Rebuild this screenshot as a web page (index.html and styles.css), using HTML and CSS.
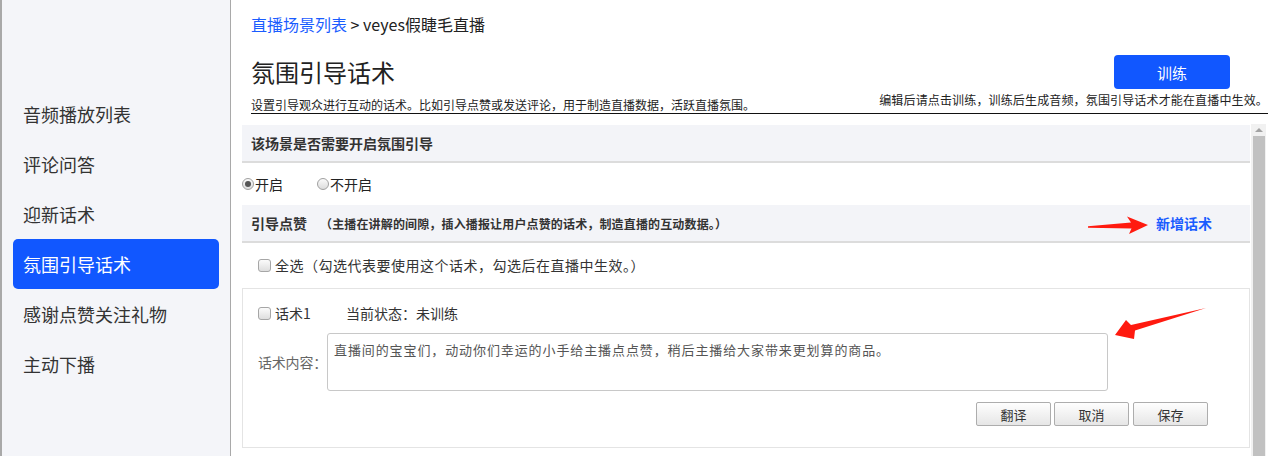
FILE: index.html
```html
<!DOCTYPE html>
<html lang="zh">
<head>
<meta charset="utf-8">
<title>氛围引导话术</title>
<link rel="stylesheet" href="styles.css">
</head>
<body>
<div class="page">
  <aside class="sidebar">
    <ul class="menu">
      <li class="menu-item">音频播放列表</li>
      <li class="menu-item">评论问答</li>
      <li class="menu-item">迎新话术</li>
      <li class="menu-item active">氛围引导话术</li>
      <li class="menu-item">感谢点赞关注礼物</li>
      <li class="menu-item">主动下播</li>
    </ul>
  </aside>
  <main class="main">
    <div class="crumb"><a class="crumb-link">直播场景列表</a> &gt; veyes假睫毛直播</div>
    <div class="title-row">
      <h1 class="title">氛围引导话术</h1>
      <button class="train-btn">训练</button>
    </div>
    <div class="desc-row">
      <span class="desc-left">设置引导观众进行互动的话术。比如引导点赞或发送评论，用于制造直播数据，活跃直播氛围。</span>
      <span class="desc-right">编辑后请点击训练，训练后生成音频，氛围引导话术才能在直播中生效。</span>
    </div>
    <div class="scroll-wrap">
      <div class="scroll-content">
        <div class="sec-head">该场景是否需要开启氛围引导</div>
        <div class="radio-row">
          <label class="radio-label"><span class="radio checked"></span>开启</label>
          <label class="radio-label"><span class="radio"></span>不开启</label>
        </div>
        <div class="sec-head split">
          <span><span>引导点赞</span><span class="sec-note">（主播在讲解的间隙，插入播报让用户点赞的话术，制造直播的互动数据。）</span></span>
          <a class="add-link">新增话术</a>
        </div>
        <div class="check-row">
          <span class="checkbox"></span>
          <span class="spaced">全选（勾选代表要使用这个话术，勾选后在直播中生效。）</span>
        </div>
        <div class="card">
          <div class="card-top">
            <span class="checkbox"></span>
            <span class="item-name">话术1</span>
            <span>当前状态：未训练</span>
          </div>
          <div class="content-row">
            <span class="content-label">话术内容：</span>
            <div class="textarea">直播间的宝宝们，动动你们幸运的小手给主播点点赞，稍后主播给大家带来更划算的商品。</div>
          </div>
          <div class="btn-row">
            <button class="btn">翻译</button>
            <button class="btn">取消</button>
            <button class="btn gap">保存</button>
          </div>
        </div>
      </div>
      <div class="scrollbar">
        <span class="sb-arrow"></span>
        <span class="sb-thumb"></span>
      </div>
    </div>
  </main>
  <svg class="arrows" width="1281" height="456" viewBox="0 0 1281 456">
    <polygon fill="#ff1a0f" points="1088,226.3 1131,222.5 1127,216.5 1148,225 1129,234 1131.5,228.5 1088,227.7"/>
    <polygon fill="#ff1a0f" points="1115,335 1126,320 1131,325 1206,308 1135,330.5 1134,339"/>
  </svg>
</div>
</body>
</html>
```
FILE: styles.css
```css
* { box-sizing: border-box; }
html, body { margin: 0; padding: 0; }
body {
  font-family: "Noto Sans CJK SC", "Liberation Sans", sans-serif;
  color: #333;
  background: #fff;
}
.page {
  position: relative;
  display: flex;
  width: 1281px;
  height: 456px;
  overflow: hidden;
}
.sidebar {
  width: 231px;
  flex: none;
  background: #f4f5f9;
  border-left: 2px solid #a9a9a9;
  border-right: 1px solid #a9a9a9;
  padding-top: 89px;
}
.menu { list-style: none; margin: 0; padding: 0; }
.menu-item {
  height: 50px;
  line-height: 50px;
  font-size: 18px;
  color: #333;
  padding-left: 21px;
  margin: 0 11px 0 0;
}
.menu-item.active {
  background: #1157ff;
  color: #fff;
  border-radius: 5px;
  margin-left: 11px;
  padding-left: 10px;
}
.main {
  flex: 1;
  display: flex;
  flex-direction: column;
  padding: 0 13px 0 10px;
}
.crumb {
  font-size: 16px;
  line-height: 20px;
  margin-top: 14px;
  padding-left: 10px;
  color: #222;
}
.crumb-link { color: #1a5cff; }
.title-row {
  display: flex;
  justify-content: space-between;
  align-items: flex-start;
  padding-left: 10px;
  margin-top: 21px;
}
.title {
  margin: 2px 0 0;
  font-size: 24px;
  font-weight: normal;
  line-height: 30px;
  color: #222;
}
.train-btn {
  width: 116px;
  height: 34px;
  margin-right: 38px;
  border: none;
  border-radius: 4px;
  background: #1157ff;
  color: #fff;
  font-family: inherit;
  font-size: 15px;
}
.desc-row {
  display: flex;
  justify-content: space-between;
  margin: 6px 0 0 10px;
  padding-right: 0;
  font-size: 12px;
  line-height: 16px;
  height: 19px;
  border-bottom: 1px solid #111;
  color: #222;
}
.desc-left { margin-top: 2px; }
.desc-right { margin-top: -3px; letter-spacing: 0.15px; }
.scroll-wrap {
  display: flex;
  margin-top: 10px;
  flex: 1;
  min-height: 0;
}
.scroll-content {
  width: 1009px;
  padding-top: 1px;
  padding-left: 1px;
}
.sec-head {
  height: 38px;
  background: #f3f4f8;
  border-bottom: 2px solid #dcdcdc;
  padding-left: 9px;
  font-size: 14px;
  font-weight: bold;
  line-height: 36px;
  color: #333;
}
.sec-note {
  font-size: 12px;
  margin-left: 13px;
  letter-spacing: 0.15px;
}
.sec-head.split {
  display: flex;
  justify-content: space-between;
  padding-right: 38px;
}
.add-link { color: #1a5cff; font-size: 14px; }
.radio-row {
  height: 42px;
  display: flex;
  align-items: center;
  font-size: 14px;
  color: #222;
}
.radio-label { display: flex; align-items: center; width: 75px; }
.radio {
  width: 12px;
  height: 12px;
  border-radius: 50%;
  border: 1px solid #a0a0a0;
  background: linear-gradient(#fafafa, #dcdcdc);
  margin-right: 1px;
  position: relative;
}
.radio.checked::after {
  content: "";
  position: absolute;
  left: 2px; top: 2px;
  width: 6px; height: 6px;
  border-radius: 50%;
  background: #555;
}
.check-row {
  height: 44px;
  display: flex;
  align-items: center;
  padding-left: 16px;
  font-size: 14px;
  color: #333;
}
.spaced { letter-spacing: 0.5px; }
.checkbox {
  width: 13px;
  height: 13px;
  border: 1px solid #a6a6a6;
  border-radius: 3px;
  background: linear-gradient(#fbfbfb, #dedede);
  margin-right: 4px;
  flex: none;
}
.card {
  height: 160px;
  border: 1px solid #e4e4e4;
  padding: 14px 41px 0 15px;
  margin-top: 1px;
}
.card-top {
  display: flex;
  align-items: center;
  height: 20px;
  font-size: 14px;
  color: #333;
}
.item-name { width: 71px; }
.content-row {
  display: flex;
  margin-top: 10px;
}
.content-label {
  font-size: 14px;
  color: #666;
  margin-top: 19px;
  width: 69px;
  flex: none;
  white-space: nowrap;
  letter-spacing: -0.2px;
}
.textarea {
  width: 781px;
  height: 58px;
  border: 1px solid #c8c8c8;
  border-radius: 3px;
  padding: 6px 6px;
  font-size: 13px;
  line-height: 20px;
  letter-spacing: 0.9px;
  color: #555;
}
.btn-row {
  display: flex;
  justify-content: flex-end;
  margin-top: 11px;
}
.btn {
  width: 75px;
  height: 24px;
  margin-left: 3px;
  border: 1px solid #adadad;
  border-radius: 2px;
  background: linear-gradient(#fefefe, #e6e6e6);
  font-family: inherit;
  font-size: 13px;
  color: #333;
  padding: 0;
}
.btn.gap { margin-left: 4px; }
.scrollbar {
  width: 15px;
  background: #f1f1f1;
  margin-left: 1px;
  display: flex;
  flex-direction: column;
  align-items: center;
}
.sb-arrow {
  margin-top: 4px;
  width: 0; height: 0;
  border-left: 4px solid transparent;
  border-right: 4px solid transparent;
  border-bottom: 4px solid #a3a3a3;
}
.sb-thumb {
  margin-top: 4px;
  width: 12px;
  flex: 1;
  background: #c1c1c1;
}
.arrows {
  position: absolute;
  left: 0; top: 0;
  pointer-events: none;
}
```
